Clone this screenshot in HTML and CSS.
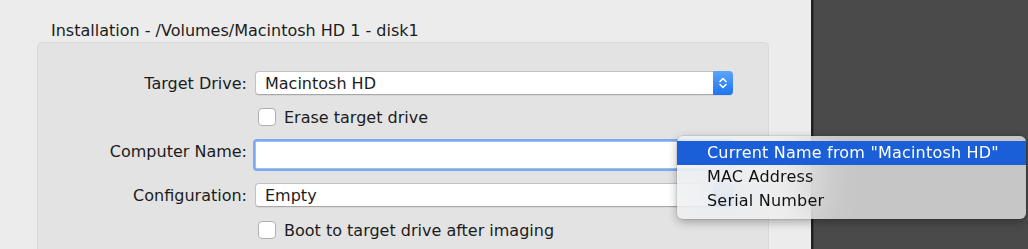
FILE: index.html
```html
<!DOCTYPE html>
<html>
<head>
<meta charset="utf-8">
<link rel="stylesheet" href="styles.css">
</head>
<body>
<div class="screen">
  <div class="window">
    <div class="group-title">Installation - /Volumes/Macintosh HD 1 - disk1</div>
    <div class="group">
      <div class="form">
        <div class="label">Target Drive:</div>
        <div class="popup">
          <span class="popup-text">Macintosh HD</span>
          <span class="stepper">
            <svg width="10" height="14" viewBox="0 0 10 14"><path d="M2 5.5 L5 2.5 L8 5.5 M2 8.5 L5 11.5 L8 8.5" fill="none" stroke="#fff" stroke-width="1.6" stroke-linecap="round" stroke-linejoin="round"/></svg>
          </span>
        </div>

        <div class="spacer"></div>
        <label class="check check-erase"><span class="box"></span><span>Erase target drive</span></label>

        <div class="label">Computer Name:</div>
        <div class="field"></div>

        <div class="label label-config">Configuration:</div>
        <div class="popup popup-config">
          <span class="popup-text">Empty</span>
          <span class="stepper">
            <svg width="10" height="14" viewBox="0 0 10 14"><path d="M2 5.5 L5 2.5 L8 5.5 M2 8.5 L5 11.5 L8 8.5" fill="none" stroke="#fff" stroke-width="1.6" stroke-linecap="round" stroke-linejoin="round"/></svg>
          </span>
        </div>

        <div class="spacer"></div>
        <label class="check check-boot"><span class="box"></span><span>Boot to target drive after imaging</span></label>
      </div>
    </div>
  </div>
  <div class="desktop"></div>

  <div class="menu">
    <div class="item selected">Current Name from "Macintosh HD"</div>
    <div class="item">MAC Address</div>
    <div class="item">Serial Number</div>
  </div>
</div>
</body>
</html>
```

FILE: styles.css
```css
html, body {
  margin: 0;
  padding: 0;
}
body {
  width: 1028px;
  height: 249px;
  overflow: hidden;
  font-family: "DejaVu Sans", "Noto Sans", sans-serif;
  font-size: 16px;
  color: #1c1c1c;
}
.screen {
  position: relative;
  display: flex;
  height: 249px;
  overflow: hidden;
}
.window {
  width: 811px;
  height: 249px;
  flex: none;
  background: #ececec;
  padding: 21px 0 0 0;
  box-sizing: border-box;
  overflow: hidden;
}
.desktop {
  flex: 1;
  background: #4a4a4a;
  border-left: 2px solid #1e1e1e;
  box-shadow: inset 1px 0 0 #3a3a3a;
}
.group-title {
  margin-left: 51px;
  line-height: 19px;
  height: 21px;
}
.group {
  margin-left: 37px;
  width: 732px;
  height: 207px;
  background: #e3e3e3;
  border: 1px solid #d9d9d9;
  border-bottom: none;
  border-radius: 5px 5px 0 0;
  box-sizing: border-box;
  padding-top: 28px;
}
.form {
  display: grid;
  grid-template-columns: 209px 478px;
  column-gap: 8px;
  align-items: center;
}
.label {
  text-align: right;
}
.popup {
  height: 24px;
  background: #fff;
  border: 1px solid #c2c2c2;
  border-bottom-color: #a8a8a8;
  border-radius: 4px;
  box-sizing: border-box;
  display: flex;
  align-items: center;
  justify-content: space-between;
  box-shadow: 0 1px 0 rgba(0,0,0,0.05);
}
.popup-text {
  padding-left: 9px;
}
.stepper {
  width: 20px;
  height: 24px;
  margin: -1px -1px -1px 0;
  background: linear-gradient(#5aa5fb, #1e74f1);
  border-radius: 0 4px 4px 0;
  display: flex;
  align-items: center;
  justify-content: center;
}
.check {
  display: flex;
  align-items: center;
  gap: 8px;
  height: 34px;
  padding-left: 3px;
}
.check-erase {
  margin-top: 5px;
}
.check-boot {
  margin-top: 6px;
}
.popup-config {
  margin-top: 14px;
}
.label-config {
  margin-top: 14px;
}
.box {
  width: 18px;
  height: 18px;
  background: #fff;
  border: 1px solid #b0b0b0;
  border-radius: 4px;
  box-sizing: border-box;
}
.field {
  height: 28px;
  margin-top: 7px;
  background: #fff;
  border: 1px solid #9ec0f0;
  box-shadow: 0 0 0 2px #7aaaf0;
  border-radius: 2px;
  box-sizing: border-box;
}
.menu {
  position: absolute;
  left: 677px;
  top: 136px;
  width: 349px;
  height: 83px;
  box-sizing: border-box;
  padding: 5px 0;
  border-radius: 6px;
  background: rgba(241, 241, 241, 0.74);
  -webkit-backdrop-filter: blur(24px);
  backdrop-filter: blur(24px);
  box-shadow: 0 3px 10px rgba(0,0,0,0.3), 0 0 0 0.5px rgba(0,0,0,0.15);
  letter-spacing: 0.2px;
}
.item {
  height: 24px;
  line-height: 24px;
  padding-left: 30px;
  color: #111;
}
.item.selected {
  background: #1a5fd8;
  color: #fff;
}
```
